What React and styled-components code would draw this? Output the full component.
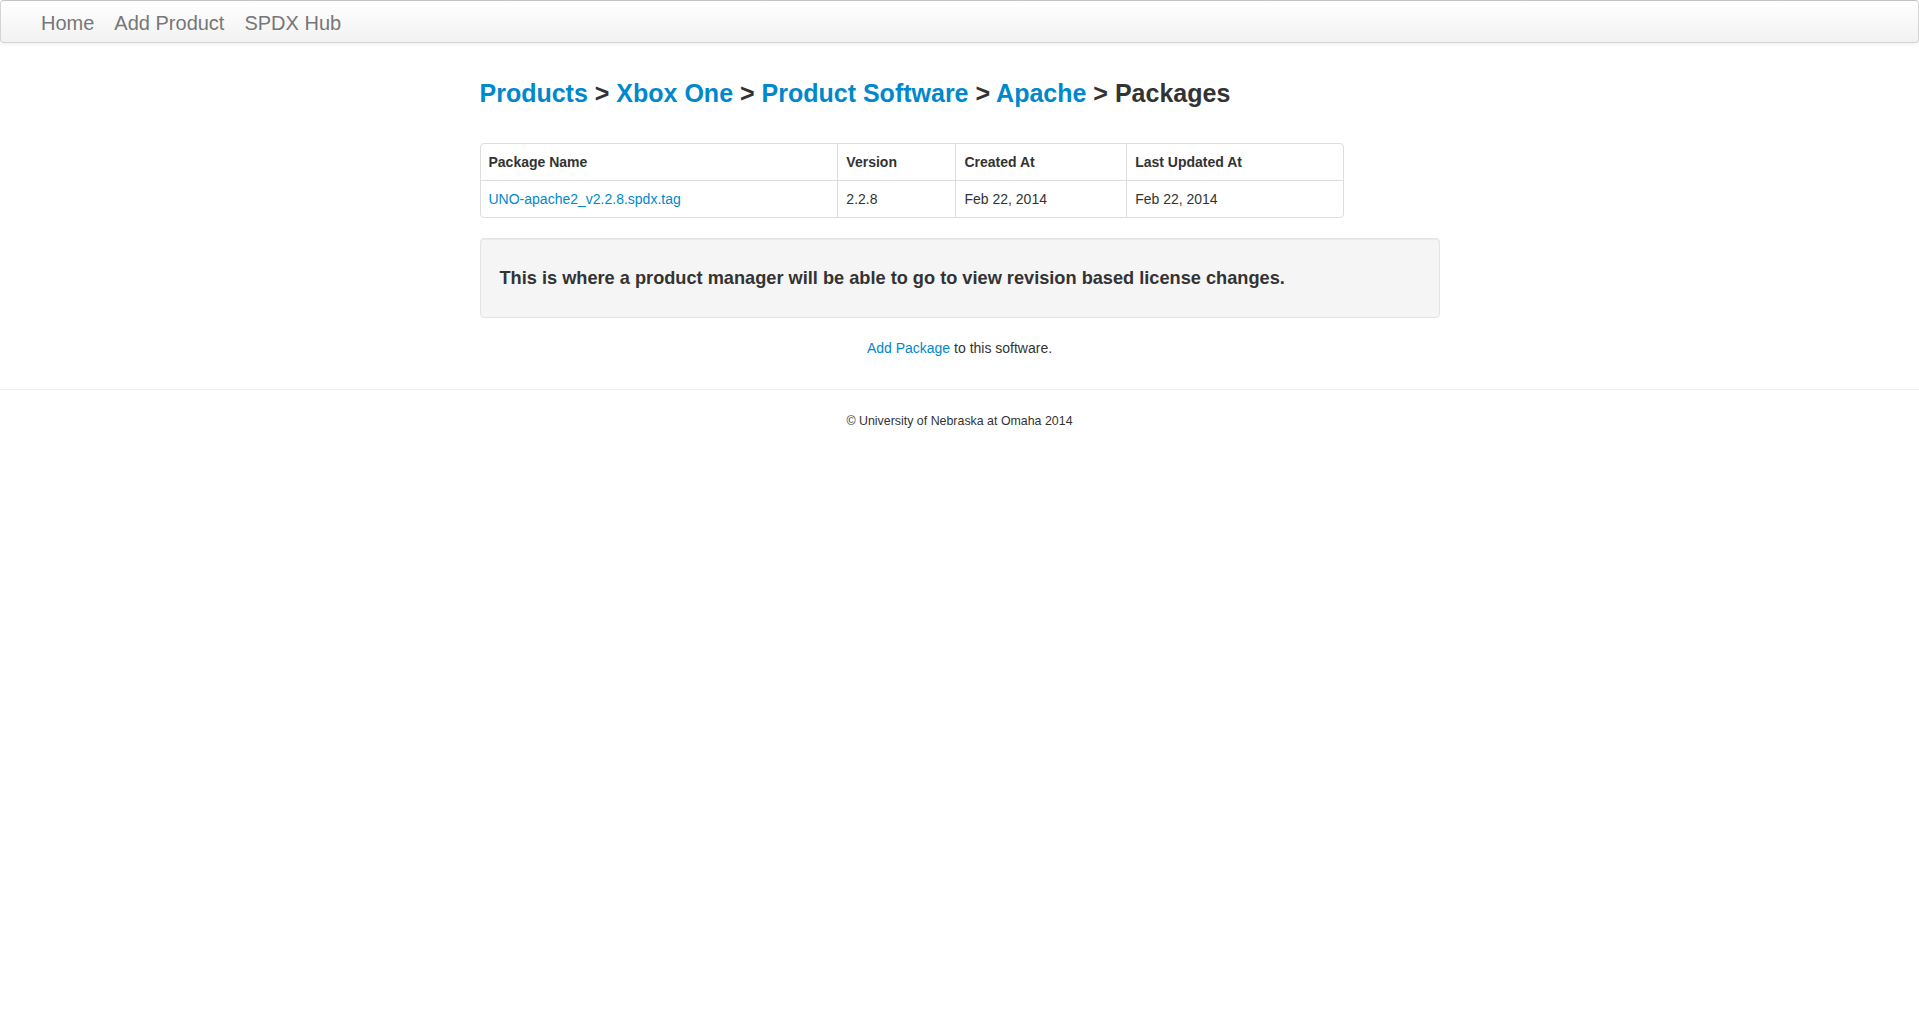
import React from 'react'
import styled, { createGlobalStyle } from 'styled-components'

const GlobalStyle = createGlobalStyle`
  body {
    margin: 0;
    background: #fff;
    font-family: "Liberation Sans", Arial, Helvetica, sans-serif;
    font-size: 14px;
    line-height: 20px;
    color: #333;
  }
  a {
    color: #0088cc;
    text-decoration: none;
  }
`

const packages = [
  { name: 'UNO-apache2_v2.2.8.spdx.tag', version: '2.2.8', created: 'Feb 22, 2014', updated: 'Feb 22, 2014' },
]

const crumbs = ['Products', 'Xbox One', 'Product Software', 'Apache']

const App = () => {
  return (
    <>
      <GlobalStyle />
      <Navbar>
        <NavLink href="#">Home</NavLink>
        <NavLink href="#">Add Product</NavLink>
        <NavLink href="#">SPDX Hub</NavLink>
      </Navbar>
      <Container>
        <Heading>
          {crumbs.map((c) => (
            <React.Fragment key={c}>
              <a href="#">{c}</a> &gt;{' '}
            </React.Fragment>
          ))}
          Packages
        </Heading>
        <Table>
          <colgroup>
            <col width="41.4%" />
            <col width="13.7%" />
            <col width="19.8%" />
            <col width="25.1%" />
          </colgroup>
          <thead>
            <tr>
              <th>Package Name</th>
              <th>Version</th>
              <th>Created At</th>
              <th>Last Updated At</th>
            </tr>
          </thead>
          <tbody>
            {packages.map((p) => (
              <tr key={p.name}>
                <td><a href="#">{p.name}</a></td>
                <td>{p.version}</td>
                <td>{p.created}</td>
                <td>{p.updated}</td>
              </tr>
            ))}
          </tbody>
        </Table>
        <Well>
          <WellTitle>This is where a product manager will be able to go to view revision based license changes.</WellTitle>
        </Well>
        <AddLine>
          <a href="#">Add Package</a> to this software.
        </AddLine>
      </Container>
      <Rule />
      <Footer>© University of Nebraska at Omaha 2014</Footer>
    </>
  )
}

const Navbar = styled.div`
  height: 41px;
  display: flex;
  align-items: center;
  gap: 20px;
  padding-left: 40px;
  background: linear-gradient(#ffffff, #f2f2f2);
  border: 1px solid #d4d4d4;
  border-top-color: #c4c4c4;
  border-radius: 4px;
  box-shadow: 0 1px 4px rgba(0, 0, 0, 0.065);
`

const NavLink = styled.a`
  && {
    color: #777;
  }
  font-size: 20px;
  line-height: 40px;
  margin-top: 2px;
`

const Container = styled.div`
  width: 960px;
  margin: 0 auto;
  padding-top: 32px;
`

const Heading = styled.h2`
  margin: 0 0 32px;
  font-size: 25px;
  line-height: 36px;
  font-weight: bold;
  color: #333;
`

const Table = styled.table`
  width: 90%;
  table-layout: fixed;
  border-collapse: separate;
  border-spacing: 0;
  border: 1px solid #ddd;
  border-radius: 4px;
  margin-bottom: 20px;

  th, td {
    padding: 8px;
    line-height: 20px;
    text-align: left;
    vertical-align: top;
    border-left: 1px solid #ddd;
  }
  th:first-child, td:first-child {
    border-left: 0;
  }
  th {
    font-weight: bold;
  }
  td {
    border-top: 1px solid #ddd;
  }
`

const Well = styled.div`
  padding: 19px;
  margin-bottom: 20px;
  background: #f5f5f5;
  border: 1px solid #e3e3e3;
  border-radius: 4px;
  box-shadow: inset 0 1px 1px rgba(0, 0, 0, 0.05);
`

const WellTitle = styled.h3`
  margin: 0;
  padding-top: 1px;
  font-size: 18.2px;
  line-height: 39px;
  font-weight: bold;
`

const AddLine = styled.p`
  margin: 0;
  text-align: center;
`

const Rule = styled.hr`
  margin: 31px 0 0;
  border: 0;
  border-top: 1px solid #eee;
`

const Footer = styled.footer`
  padding-top: 22px;
  text-align: center;
  font-size: 12.4px;
  line-height: 18px;
`

export default App
